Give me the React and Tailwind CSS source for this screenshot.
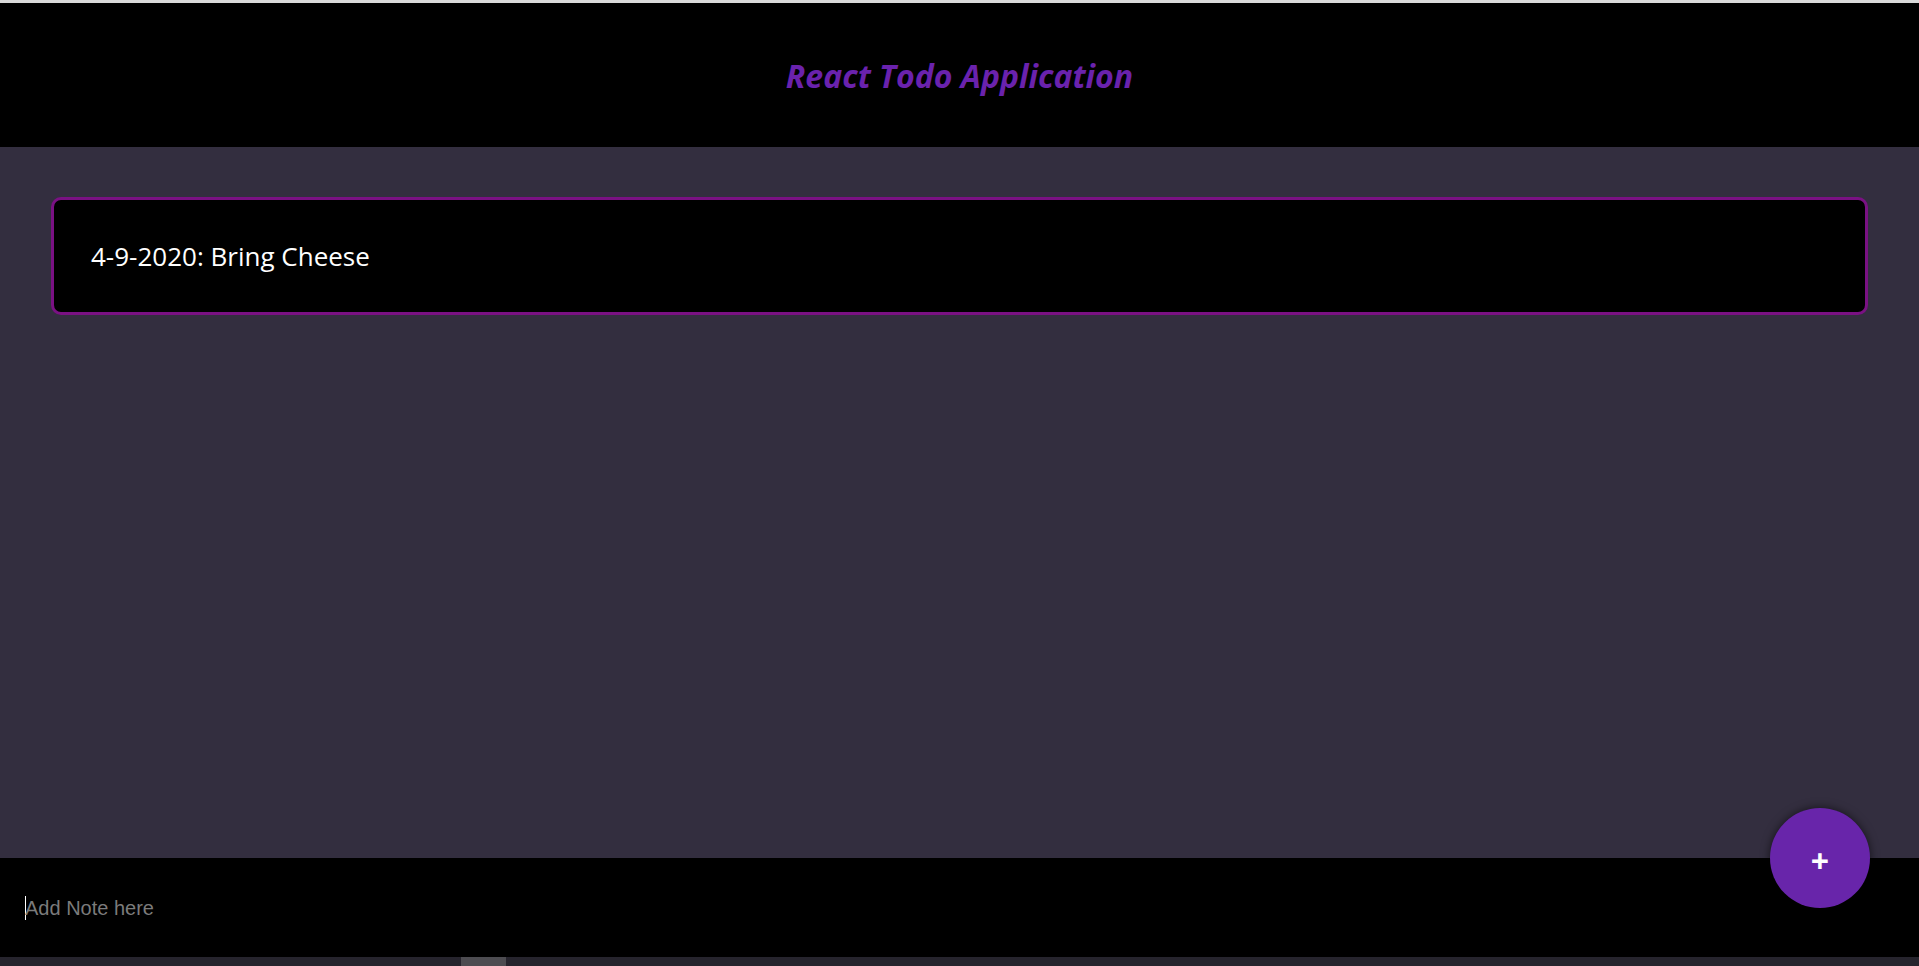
export default function App() {
  return (
    <div className="relative flex h-[966px] flex-col overflow-hidden bg-[#332e3f]" style={{ fontFamily: '"Open Sans", "Noto Sans", sans-serif' }}>
      <div className="h-[3px] bg-[#d9d9d9]" />
      <header className="flex h-[144px] items-center justify-center bg-black pt-[2px]">
        <h1 className="text-[32px] font-bold italic text-[#6a22ad]">React Todo Application</h1>
      </header>

      <main className="flex-1 px-[51px] pt-[50px]">
        <div className="flex h-[118px] items-center rounded-[10px] border-[3px] border-[#7a1183] bg-black px-[37px]">
          <span className="text-[26px] text-white">4-9-2020: Bring Cheese</span>
        </div>
      </main>

      <footer className="flex h-[99px] items-center bg-black px-[25px]">
        <span className="mr-[-1px] h-[24px] w-px bg-white" />
        <input
          className="w-full bg-transparent text-[20px] text-white caret-white outline-none placeholder:text-[#7b7b7b]"
          style={{ fontFamily: '"Liberation Sans", Arial, sans-serif' }}
          placeholder="Add Note here"
        />
      </footer>
      <div className="flex h-[9px] bg-[#26242d]">
        <div className="ml-[461px] w-[45px] bg-[#4d4c51]" />
      </div>

      <button className="absolute left-[1770px] top-[808px] flex h-[100px] w-[100px] items-center justify-center rounded-full bg-[#6825aa] pt-[6px] text-[32px] font-bold text-white shadow-[0_0_10px_rgba(0,0,0,0.6)]">
        +
      </button>
    </div>
  );
}
